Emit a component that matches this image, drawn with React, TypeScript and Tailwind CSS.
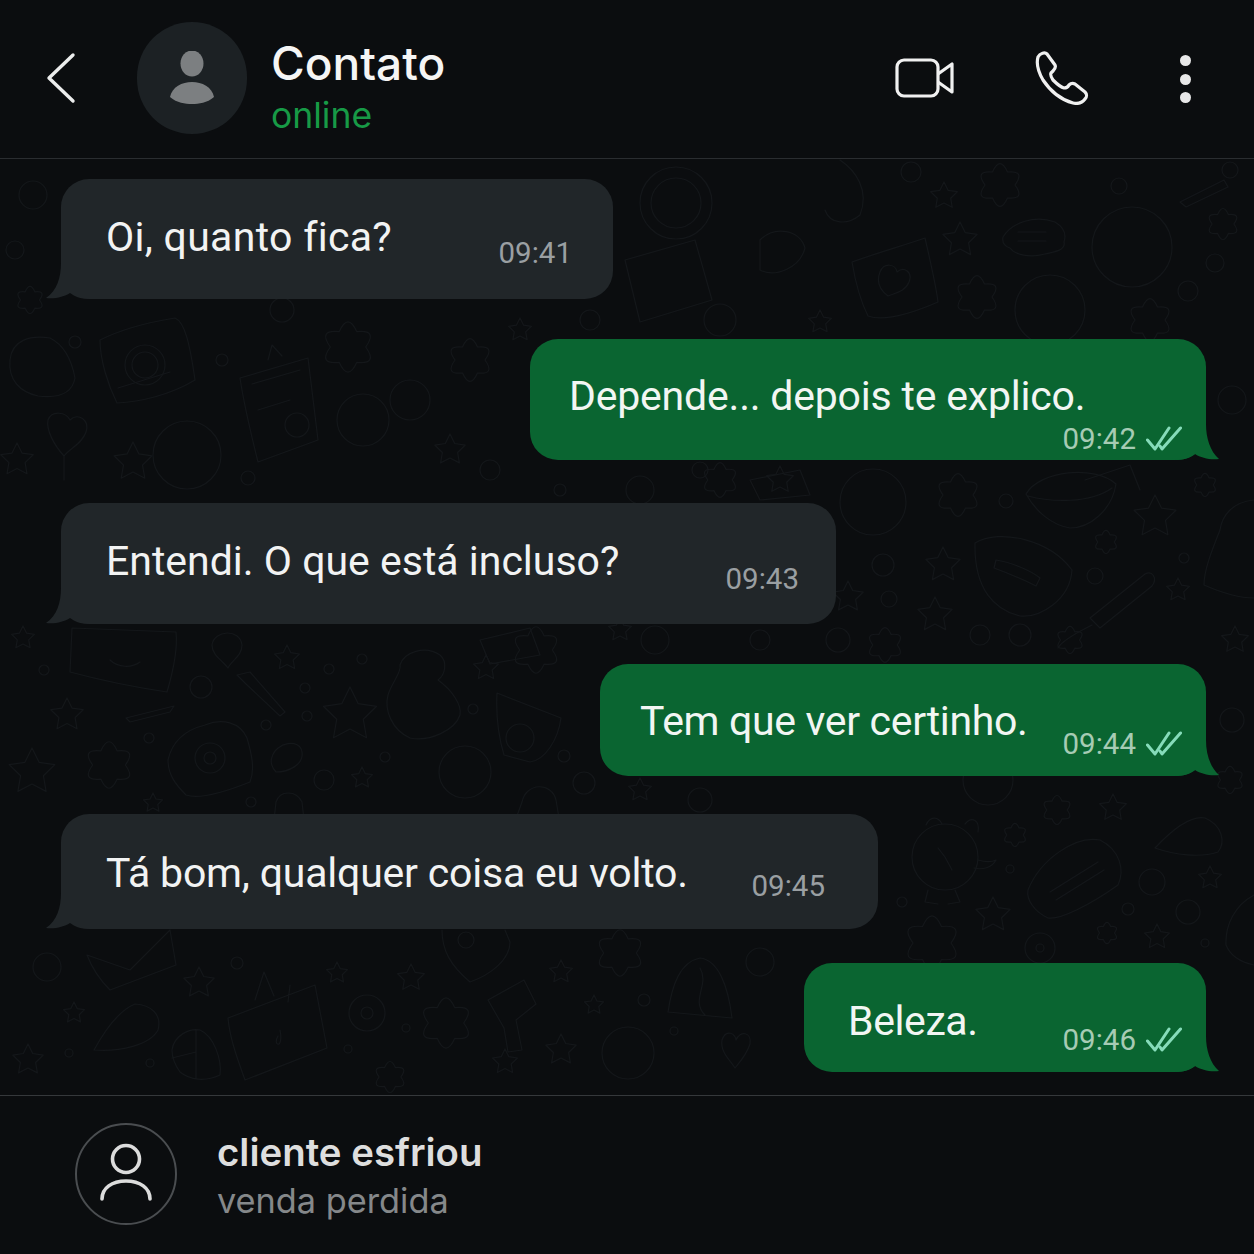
import React from "react";

const font = { fontFamily: "Inter, 'Liberation Sans', sans-serif" };
const msgFont = { fontFamily: "Roboto, 'Liberation Sans', sans-serif" };

const rings: number[][] = [
  [911,172,10],[1119,186,8],[1188,291,10],[1215,263,9],[1050,310,35],[883,565,11],[1095,576,8],[889,599,8],[1006,501,7],[1184,558,5],[980,635,10],[1020,635,11],[838,640,12],[873,502,33],[1132,247,40],
  [44,670,5],[201,687,11],[329,669,5],[362,659,5],[305,688,5],[307,716,5],[266,725,5],[324,780,10],[473,709,5],[564,756,6],[584,783,11],[385,757,5],[251,802,5],[149,738,5],[465,772,26],
  [47,967,14],[237,963,6],[69,1053,4],[150,1063,4],[367,1013,18],[367,1013,6],[406,1028,4],[348,1049,4],[644,1000,6],[760,962,14],[674,1031,4],[628,1053,26],
  [945,857,33],[1152,882,13],[1188,912,12],[1128,909,6],[1010,869,4],[902,902,5],[1040,948,15],[1040,948,4],[1205,943,4],[988,780,25],
  [145,365,20],[145,365,13],[75,342,6],[222,360,6],[363,420,26],[187,455,34],[248,478,7],[676,203,36],[676,203,25],[33,195,14],[15,250,9],[410,400,20],[490,470,10],[640,490,14],[700,470,8],[760,640,10],[720,320,16],[1232,400,14],[1232,720,12],[210,758,15],[210,758,6],[520,738,14],[282,310,12],[590,320,10],[655,640,14],[700,800,12],[560,490,6],[1230,170,8],
];
const stars: number[][] = [
  [944,196,14],[960,240,18],[1155,517,22],[943,565,18],[1178,590,12],[848,597,16],[935,615,18],
  [23,638,12],[67,715,17],[287,658,13],[350,715,28],[32,772,24],[153,803,10],[362,778,11],[486,668,13],
  [199,983,16],[74,1013,11],[28,1060,16],[337,973,11],[411,978,14],[505,1062,13],[561,1050,16],[561,972,12],[594,1005,10],
  [1113,808,14],[1210,878,12],[993,915,18],[1157,937,13],[133,462,20],[17,460,17],[450,450,16],[520,330,12],[780,480,14],[820,322,12],[620,630,12],[1235,640,14],[640,790,12],
];
const flowers: number[][] = [
  [1000,185,22],[977,297,22],[1223,224,16],[1150,320,22],[958,495,22],[1205,485,12],[1106,542,12],[885,645,18],[1070,640,14],
  [109,765,24],[536,650,24],[446,1023,26],[620,953,24],[390,1077,16],[932,943,28],[1107,933,11],[348,347,26],[470,360,22],[1057,810,15],[1015,835,12],[30,300,14],[720,480,18],[1230,780,14],
];
const paths: string[] = [
  "M852 262 C880 252 905 245 925 238 C930 260 936 285 938 302 C915 312 885 322 868 316 C860 300 855 280 852 262 Z M880 272 C884 262 896 264 897 272 C904 266 913 272 909 282 C905 292 895 293 888 296 C880 290 876 282 880 272 Z",
  "M1003 237 C1012 222 1035 215 1055 222 C1065 228 1066 236 1064 242 C1066 250 1055 252 1045 254 C1030 258 1015 255 1010 248 C1004 246 1002 242 1003 237 Z M1018 232 H1046 M1018 241 H1046",
  "M1180 202 L1224 180 L1228 187 L1186 207 Z",
  "M1026 494 C1040 470 1095 465 1116 484 C1112 510 1090 528 1070 528 C1052 525 1036 512 1026 494 Z M1028 496 C1050 502 1090 504 1112 488",
  "M975 543 C1000 528 1050 540 1072 570 C1070 600 1040 618 1020 616 C995 610 974 590 975 543 Z M996 560 C1010 562 1030 570 1040 578 L1036 586 C1020 578 1005 572 994 568 Z",
  "M1090 618 L1145 574 C1152 570 1158 578 1152 586 L1100 628 Z M1092 625 C1082 630 1062 640 1058 648",
  "M1254 500 C1232 502 1222 516 1220 530 C1212 550 1204 570 1204 585 C1220 592 1240 598 1254 598",
  "M72 628 L176 632 C178 650 172 675 167 692 C140 688 100 680 70 672 Z M110 660 C118 668 132 668 140 662",
  "M237 675 L250 672 L285 712 L280 716 L246 684 Z",
  "M126 718 L174 706 L170 712 L130 722 Z",
  "M168 760 C172 742 185 730 205 725 C222 718 240 722 247 738 C252 755 255 770 250 782 C225 792 200 800 186 795 C176 785 168 775 168 760 Z",
  "M400 665 C404 652 425 645 440 655 C448 662 445 675 438 680 C452 690 462 705 460 715 C455 730 430 742 410 738 C392 730 384 710 388 695 C392 682 402 672 400 665 Z",
  "M497 693 L561 718 C558 740 545 760 530 762 L504 755 C498 735 496 712 497 693 Z",
  "M212 645 C214 630 240 628 242 645 C242 656 232 660 228 668 C222 660 212 655 212 645 Z",
  "M272 757 C276 742 300 738 302 752 C304 765 288 772 276 772 C272 768 270 762 272 757 Z",
  "M522 802 C526 782 552 782 556 800 L560 824 H514 Z",
  "M276 802 C280 790 296 790 302 802 L304 820 H274 Z",
  "M87 955 L130 970 L170 930 L176 965 L110 990 C100 980 92 968 87 955 Z",
  "M94 1050 C105 1030 120 1010 135 1004 C152 1005 162 1015 158 1030 C150 1045 120 1052 94 1050 Z",
  "M172 1050 C174 1035 190 1028 200 1030 C214 1036 222 1060 220 1075 C205 1082 190 1080 180 1072 C175 1065 172 1058 172 1050 Z M196 1030 V1078 M172 1058 L196 1052",
  "M228 1018 L315 985 L327 1048 L245 1080 C238 1060 230 1040 228 1018 Z M255 1000 L264 972 L274 996 M290 985 L288 1002 M278 1036 C272 1046 284 1050 280 1030",
  "M442 930 C442 950 450 965 470 982 C490 975 510 960 510 942 L505 930 M458 940 a8 8 0 1 0 16 0 a8 8 0 1 0 -16 0",
  "M488 1000 L524 980 L536 1004 L516 1020 L522 1050 L508 1052 L504 1028 Z",
  "M668 1012 C672 985 680 962 700 958 C718 960 728 985 732 1018 Z M700 968 C710 985 690 1000 705 1015",
  "M722 1040 C726 1028 736 1034 736 1040 C740 1030 752 1032 750 1044 C746 1056 738 1064 735 1068 C730 1060 720 1052 722 1040 Z",
  "M926 825 C930 816 938 816 942 824 M965 824 C972 816 980 820 978 832 M978 860 C985 862 992 862 996 860 C992 868 982 870 974 868 M928 890 L925 902 L938 904 M955 890 L960 902 L948 904 M945 857 L952 870 M945 857 L938 848",
  "M1028 890 C1040 860 1075 835 1100 840 C1120 850 1125 870 1118 885 C1090 905 1060 920 1048 918 C1035 912 1026 900 1028 890 Z M1050 892 L1098 862 M1056 900 L1104 870",
  "M1155 848 C1170 832 1190 815 1205 818 C1222 825 1226 842 1218 852 C1200 858 1175 855 1155 848 Z",
  "M1254 895 C1235 905 1225 925 1226 945 C1230 955 1240 962 1254 965",
  "M100 340 C120 330 150 322 175 318 C185 322 190 345 195 380 C170 395 140 402 117 403 C108 385 100 360 100 340 Z M118 388 L170 372",
  "M240 378 L308 358 L318 440 L258 462 C250 430 244 405 240 378 Z M268 360 L272 345 L282 356 M252 384 L300 370 M258 410 L290 400 M285 425 a12 12 0 1 0 24 0 a12 12 0 1 0 -24 0",
  "M10 360 C12 340 30 335 50 338 C66 346 72 362 75 378 C72 395 55 398 38 396 C20 392 8 380 10 360 Z",
  "M48 420 C52 410 66 412 70 420 C78 412 90 420 86 432 C82 444 70 448 64 456 V480 M48 420 C46 430 54 445 64 456",
  "M1115 360 L1165 345 L1195 395 L1130 430 Z",
  "M840 160 C855 170 870 190 860 215 C848 225 830 225 825 210",
  "M760 240 C775 225 800 230 805 248 C800 268 775 278 760 270 Z",
  "M625 260 L695 240 L712 300 L640 322 Z",
  "M480 640 L530 628 L540 655 L490 664 Z",
  "M750 480 L800 470 L810 495 L760 500 Z",
  "M1085 480 L1130 465 L1140 490",
];

function starPath(x: number, y: number, r: number) {
  let d = "";
  for (let i = 0; i < 10; i++) {
    const a = -Math.PI / 2 + (i * Math.PI) / 5;
    const q = i % 2 ? r * 0.5 : r;
    d += (i ? "L" : "M") + (x + q * Math.cos(a)).toFixed(1) + " " + (y + q * Math.sin(a)).toFixed(1);
  }
  return d + "Z";
}

function flowerPath(x: number, y: number, r: number) {
  let d = "";
  const n = 6;
  for (let i = 0; i < n; i++) {
    const a0 = (i * 2 * Math.PI) / n;
    const a1 = ((i + 1) * 2 * Math.PI) / n;
    const m = (a0 + a1) / 2;
    const p0 = [x + r * 0.68 * Math.cos(a0), y + r * 0.68 * Math.sin(a0)];
    const p1 = [x + r * 0.68 * Math.cos(a1), y + r * 0.68 * Math.sin(a1)];
    const c = [x + r * 1.35 * Math.cos(m), y + r * 1.35 * Math.sin(m)];
    if (i === 0) d += `M${p0[0].toFixed(1)} ${p0[1].toFixed(1)}`;
    d += `Q${c[0].toFixed(1)} ${c[1].toFixed(1)} ${p1[0].toFixed(1)} ${p1[1].toFixed(1)}`;
  }
  return d + "Z";
}

function Doodles() {
  return (
    <svg className="absolute inset-0 h-full w-full" viewBox="0 159 1254 936" preserveAspectRatio="none" fill="none" stroke="#14171a" strokeWidth="1.2" strokeLinejoin="round" strokeLinecap="round">
      {rings.map(([x, y, r], i) => <circle key={"r" + i} cx={x} cy={y} r={r} />)}
      {stars.map(([x, y, r], i) => <path key={"s" + i} d={starPath(x, y, r)} />)}
      {flowers.map(([x, y, r], i) => <path key={"f" + i} d={flowerPath(x, y, r)} />)}
      {paths.map((d, i) => <path key={"p" + i} d={d} />)}
    </svg>
  );
}

function Ticks() {
  return (
    <svg width="36" height="26" viewBox="0 0 36 26" fill="none" stroke="#86dcba" strokeWidth="3" strokeLinecap="round" strokeLinejoin="round">
      <path d="M1.5 14 L9 23 L23 2" />
      <path d="M14 20 L16 23 L34.5 2" />
    </svg>
  );
}

function TailLeft() {
  return (
    <svg className="absolute bottom-0 left-[-15px]" width="44" height="36" viewBox="0 0 44 36" fill="#212629">
      <path d="M15 0 C15 14 11 28 0 35 C9 36 18 34 24 30 C28 33 34 36 44 36 V0 Z" />
    </svg>
  );
}

function TailRight() {
  return (
    <svg className="absolute bottom-0 right-[-13px]" width="44" height="36" viewBox="0 0 44 36" fill="#0a6531">
      <path d="M31 0 C31 14 35 27 44 35 C35 36 26 34 20 30 C16 33 10 36 0 36 V0 Z" />
    </svg>
  );
}

function Incoming({ text, time, className, textClass, timeClass }: { text: string; time: string; className: string; textClass: string; timeClass: string }) {
  return (
    <div className={"relative flex self-start justify-between rounded-[28px] bg-[#212629] pl-[45px] " + className} style={msgFont}>
      <TailLeft />
      <span className={"relative text-[41px] leading-[48px] text-[#f2f3f3] " + textClass}>{text}</span>
      <span className={"relative text-[29.5px] leading-[34px] text-[#9a9fa2] " + timeClass}>{time}</span>
    </div>
  );
}

function Outgoing({ text, time, className, textClass, metaClass }: { text: string; time: string; className: string; textClass: string; metaClass: string }) {
  return (
    <div className={"relative flex self-end rounded-[28px] bg-[#0a6531] pr-[24px] " + className} style={msgFont}>
      <TailRight />
      <span className={"relative text-[41px] leading-[48px] text-[#f2f6f3] " + textClass}>{text}</span>
      <span className={"relative flex items-center gap-[10px] text-[29.5px] leading-[34px] text-[#a6cbb4] " + metaClass}>
        {time}
        <Ticks />
      </span>
    </div>
  );
}

export default function App() {
  return (
    <div className="flex h-[1254px] w-[1254px] flex-col overflow-hidden bg-[#0b0d0f]" style={font}>
      <header className="flex h-[159px] shrink-0 items-center border-b border-[#2a2d30] pl-[44px] pr-[63px] pb-[2px]">
        <svg width="34" height="52" viewBox="0 0 34 52" fill="none" stroke="#eceded" strokeWidth="3.4" strokeLinecap="round" strokeLinejoin="round">
          <path d="M29 3 L5 26 L29 49" />
        </svg>
        <div className="ml-[59px] flex h-[112px] w-[110px] items-center justify-center rounded-full bg-[#1c2124]">
          <svg width="46" height="54" viewBox="0 0 46 54" fill="#7c7f81">
            <ellipse cx="23" cy="12.5" rx="11.5" ry="13" />
            <path d="M1 46 C3 36 13 31 23 31 C33 31 43 36 45 46 C38 52 30 53 23 53 C16 53 8 52 1 46 Z" />
          </svg>
        </div>
        <div className="ml-[25px] mt-[22px] flex flex-col">
          <span className="-ml-[1px] text-[46px] leading-[50px] font-medium text-[#f5f5f5]">Contato</span>
          <span className="-ml-[1px] mt-[3px] text-[35.5px] leading-[50px] text-[#179a46]">online</span>
        </div>
        <div className="ml-auto flex items-center">
          <svg width="60" height="42" viewBox="0 0 60 42" fill="none" stroke="#f0f0f0" strokeWidth="3.2" strokeLinejoin="round">
            <rect x="2" y="3" width="41" height="36" rx="7" />
            <path d="M43 17 L57 7 V35 L43 25" />
          </svg>
          <svg className="ml-[79px]" width="56" height="54" viewBox="0 0 56 54" fill="none" stroke="#f0f0f0" strokeWidth="3.2" strokeLinejoin="round">
            <path d="M4 6 C6 2 11 1 13 3 L21 14 C22 16 21 18 19 20 L17 22 C16 24 17 26 19 29 C23 33 26 36 30 37 C32 37 34 36 35 34 C37 32 39 32 41 33 L51 41 C53 43 53 46 51 48 C48 52 43 53 39 52 C28 49 17 41 9 29 C5 22 2 13 4 6 Z" />
          </svg>
          <div className="ml-[90px] mt-[2px] flex flex-col gap-[7.5px]">
            <span className="h-[11px] w-[11px] rounded-full bg-[#e8e8e8]" />
            <span className="h-[11px] w-[11px] rounded-full bg-[#e8e8e8]" />
            <span className="h-[11px] w-[11px] rounded-full bg-[#e8e8e8]" />
          </div>
        </div>
      </header>

      <main className="relative flex min-h-0 flex-1 flex-col pl-[61px] pr-[48px] pt-[20px]">
        <Doodles />
        <Incoming text="Oi, quanto fica?" time="09:41" className="h-[120px] w-[552px] pr-[41px] pt-[34px]" textClass="tracking-[0.3px]" timeClass="mt-[23px]" />
        <Outgoing text="Depende... depois te explico." time="09:42" className="mt-[40px] h-[121px] w-[676px] flex-col pl-[39px] pt-[33px]" textClass="tracking-[-0.2px]" metaClass="self-end mt-[2px]" />
        <Incoming text="Entendi. O que está incluso?" time="09:43" className="mt-[43px] h-[121px] w-[775px] pr-[37px] pt-[34px]" textClass="" timeClass="mt-[25px]" />
        <Outgoing text="Tem que ver certinho." time="09:44" className="mt-[40px] h-[112px] w-[606px] justify-between pl-[40px] pt-[33px]" textClass="tracking-[-0.33px]" metaClass="mt-[30px] self-start" />
        <Incoming text="Tá bom, qualquer coisa eu volto." time="09:45" className="mt-[38px] h-[115px] w-[817px] pr-[53px] pt-[35px]" textClass="tracking-[-0.2px]" timeClass="mt-[20px]" />
        <Outgoing text="Beleza." time="09:46" className="mt-[34px] h-[109px] w-[402px] justify-between pl-[44px] pt-[34px]" textClass="tracking-[-0.4px]" metaClass="mt-[26px] self-start" />
      </main>

      <footer className="flex h-[159px] shrink-0 items-center border-t border-[#35383b] bg-[#0b0d0f] pl-[75px] pb-[2px]">
        <div className="flex h-[102px] w-[102px] items-center justify-center rounded-full border-2 border-[#4a4d50]">
          <svg className="overflow-visible" width="54" height="58" viewBox="0 0 54 58" fill="none" stroke="#dcdcdc" strokeWidth="3.6" strokeLinecap="round">
            <circle cx="27" cy="14" r="13.5" />
            <path d="M3 54 C3 43 13 36 27 36 C41 36 51 43 51 54" />
          </svg>
        </div>
        <div className="ml-[41px] mt-[3px] flex flex-col">
          <span className="-ml-[1px] text-[38.4px] leading-[48px] font-semibold text-[#dedede]">cliente esfriou</span>
          <span className="-ml-[1px] mt-[2px] text-[34.3px] leading-[46px] text-[#85888a]">venda perdida</span>
        </div>
      </footer>
    </div>
  );
}
